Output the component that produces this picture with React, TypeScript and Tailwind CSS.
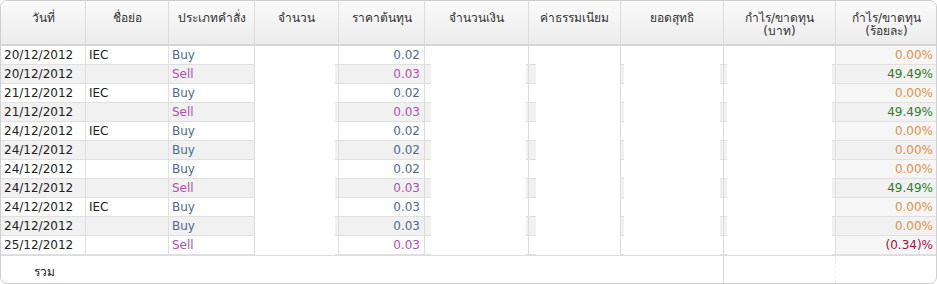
import React from "react";

type Row = { d: string; s: string; t: "Buy" | "Sell"; p: string; pct: string };

const rows: Row[] = [
  { d: "20/12/2012", s: "IEC", t: "Buy", p: "0.02", pct: "0.00%" },
  { d: "20/12/2012", s: "", t: "Sell", p: "0.03", pct: "49.49%" },
  { d: "21/12/2012", s: "IEC", t: "Buy", p: "0.02", pct: "0.00%" },
  { d: "21/12/2012", s: "", t: "Sell", p: "0.03", pct: "49.49%" },
  { d: "24/12/2012", s: "IEC", t: "Buy", p: "0.02", pct: "0.00%" },
  { d: "24/12/2012", s: "", t: "Buy", p: "0.02", pct: "0.00%" },
  { d: "24/12/2012", s: "", t: "Buy", p: "0.02", pct: "0.00%" },
  { d: "24/12/2012", s: "", t: "Sell", p: "0.03", pct: "49.49%" },
  { d: "24/12/2012", s: "IEC", t: "Buy", p: "0.03", pct: "0.00%" },
  { d: "24/12/2012", s: "", t: "Buy", p: "0.03", pct: "0.00%" },
  { d: "25/12/2012", s: "", t: "Sell", p: "0.03", pct: "(0.34)%" },
];

const widths = [85, 83, 86, 84, 86, 104, 92, 103, 112, 102];
const headers: string[][] = [
  ["วันที่"],
  ["ชื่อย่อ"],
  ["ประเภทคำสั่ง"],
  ["จำนวน"],
  ["ราคาต้นทุน"],
  ["จำนวนเงิน"],
  ["ค่าธรรมเนียม"],
  ["ยอดสุทธิ"],
  ["กำไร/ขาดทุน", "(บาท)"],
  ["กำไร/ขาดทุน", "(ร้อยละ)"],
];

function Blank({ w, l, r, even }: { w: number; l: number; r: number; even: boolean }) {
  const stub = even ? "bg-[#f1f1f1]" : "bg-white";
  return (
    <div className="flex h-full shrink-0 border-l border-[#dcdcdc]" style={{ width: w }}>
      {l > 0 && <div className={`h-full border-b border-[#e0e0e0] ${stub}`} style={{ width: l }} />}
      <div className="h-full flex-1 bg-white" />
      {r > 0 && <div className={`h-full border-b border-[#e0e0e0] ${stub}`} style={{ width: r }} />}
    </div>
  );
}

function pctColor(p: string) {
  if (p.startsWith("(")) return "text-[#a01040]";
  if (p === "0.00%") return "text-[#e0904a]";
  return "text-[#2e7d2e]";
}

export default function App() {
  return (
    <div
      className="w-[937px] h-[284px] bg-white text-[12px] text-[#222]"
      style={{ fontFamily: '"DejaVu Sans", "Noto Sans", "Liberation Sans", sans-serif' }}
    >
      <div className="w-[937px] h-[284px] border border-[#cfcfcf] rounded-[7px] overflow-hidden flex flex-col">
        {/* header */}
        <div className="flex h-[45px] shrink-0 bg-gradient-to-b from-[#fbfbfb] to-[#ececec] border-b-2 border-[#d6d6d6]">
          {headers.map((h, i) => (
            <div
              key={i}
              className={`shrink-0 flex flex-col items-center pt-[11px] leading-[13px] text-[#333] ${i > 0 ? "border-l border-[#dcdcdc]" : ""}`}
              style={{ width: i === 0 ? widths[i] - 1 : widths[i] }}
            >
              {h.map((t, j) => (
                <span key={j}>{t}</span>
              ))}
            </div>
          ))}
        </div>
        {/* body */}
        {rows.map((r, idx) => {
          const even = idx % 2 === 1;
          const bg = even ? "bg-[#f1f1f1]" : "bg-white";
          return (
            <div key={idx} className="flex h-[19px] shrink-0 leading-[18px]">
              <div className={`shrink-0 w-[84px] pl-[3px] border-b border-[#e0e0e0] ${bg}`}>{r.d}</div>
              <div className={`shrink-0 w-[83px] pl-[3px] border-l border-b border-[#e0e0e0] ${bg}`}>{r.s}</div>
              <div
                className={`shrink-0 w-[86px] pl-[3px] border-l border-b border-[#e0e0e0] ${bg} ${
                  r.t === "Buy" ? "text-[#4f6a8c]" : "text-[#b050b0]"
                }`}
              >
                {r.t}
              </div>
              <Blank w={84} l={0} r={3} even={even} />
              <div
                className={`shrink-0 w-[86px] pr-[4px] text-right border-l border-b border-[#e0e0e0] ${bg} ${
                  r.t === "Buy" ? "text-[#4f6a8c]" : "text-[#b050b0]"
                }`}
              >
                {r.p}
              </div>
              <Blank w={104} l={6} r={2} even={even} />
              <Blank w={92} l={7} r={0} even={even} />
              <Blank w={103} l={3} r={3} even={even} />
              <Blank w={112} l={3} r={3} even={even} />
              <div
                className={`shrink-0 w-[101px] pr-[3px] text-right border-l border-b border-[#e0e0e0] ${
                  even ? "bg-[#f1f1f1]" : "bg-[#f6f6f6]"
                } ${pctColor(r.pct)}`}
              >
                {r.pct}
              </div>
            </div>
          );
        })}
        {/* footer */}
        <div className="flex flex-1 border-t border-[#dcdcdc]">
          <div className="w-[722px] shrink-0 pl-[33px] pt-[7px]">รวม</div>
          <div className="w-[112px] shrink-0 border-l border-[#dcdcdc]" />
          <div className="flex-1 border-l border-dashed border-[#eeeeee]" />
        </div>
      </div>
    </div>
  );
}
